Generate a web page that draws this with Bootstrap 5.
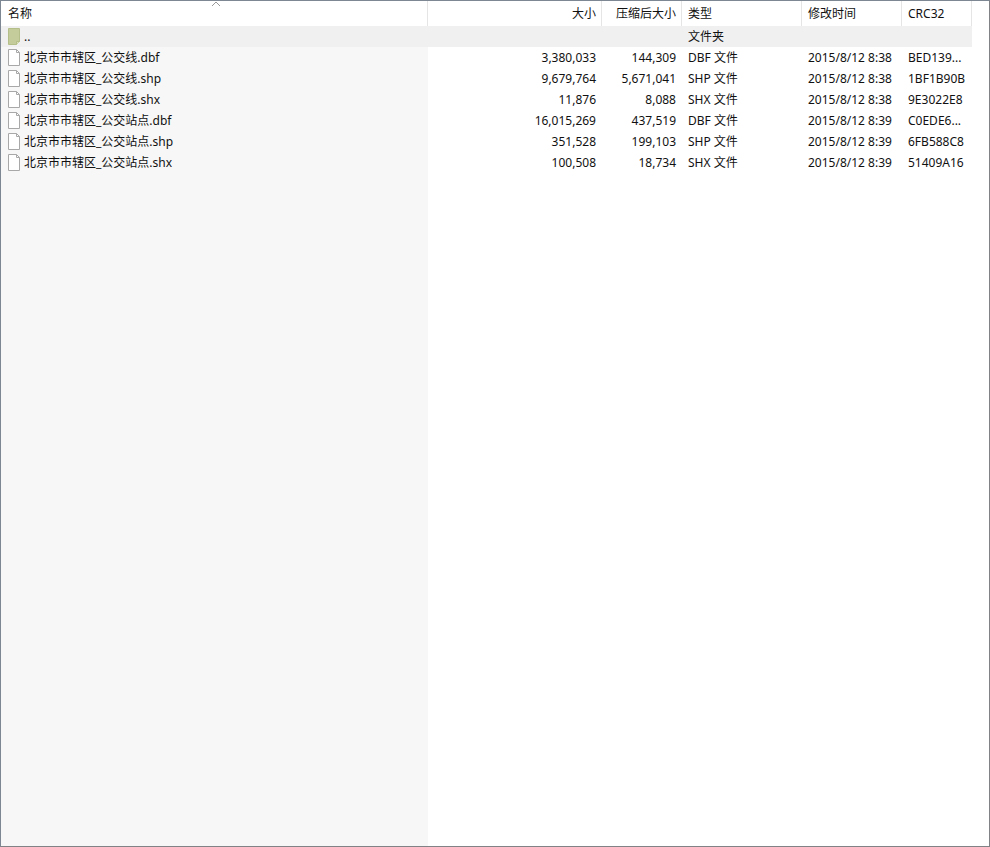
<!DOCTYPE html>
<html lang="zh-CN">
<head>
    <meta charset="UTF-8" />
    <meta name="viewport" content="width=device-width, initial-scale=1" />
    <title>北京市市辖区_公交</title>
    <link href="https://cdn.jsdelivr.net/npm/bootstrap@5.3.0/dist/css/bootstrap.min.css" rel="stylesheet" />
    <style>
        html, body { height: 100%; }
        body {
            background: #fff;
            color: #111;
            font-family: "Noto Sans", "Noto Sans CJK SC", sans-serif;
            font-size: 12px;
            margin: 0;
        }
        .zip-window {
            height: 847px;
            border: 1px solid #7d8794;
            border-right-color: #808285;
            border-bottom-color: #808285;
            position: relative;
        }
        .zip-list {
            table-layout: fixed;
            border-collapse: separate;
            border-spacing: 0;
            width: 971px;
        }
        .zip-list th, .zip-list td {
            padding: 0 6px;
            font-weight: 400;
            white-space: nowrap;
            overflow: hidden;
            line-height: 21px;
        }
        .zip-list th {
            height: 25px;
            line-height: 25px;
            border-right: 1px solid #e5e5e5;
        }
        .zip-list th:first-child { padding-left: 7px; }
        .zip-list th.text-end { padding-right: 5px; }
        .zip-list td { height: 21px; }
        .zip-list td:first-child { background: #f7f7f7; }
        .zip-list .row-up td { background: #f0f0f0; }
        .name-cell { display: flex; align-items: center; gap: 3px; }
        .sort-mark { position: absolute; left: 210px; top: 0; }
        .name-fill { width: 427px; background: #f7f7f7; flex: none; }
    </style>
</head>
<body>
    <div class="zip-window d-flex flex-column">
        <svg class="sort-mark" width="10" height="6" viewBox="0 0 10 6"><path d="M1 5 5 1l4 4" fill="none" stroke="#9a9a9a" /></svg>
        <table class="zip-list" id="fileTable">
            <colgroup>
                <col style="width:427px" /><col style="width:174px" /><col style="width:80px" /><col style="width:120px" /><col style="width:100px" /><col style="width:70px" />
            </colgroup>
            <thead>
                <tr>
                    <th>名称</th>
                    <th class="text-end">大小</th>
                    <th class="text-end">压缩后大小</th>
                    <th>类型</th>
                    <th>修改时间</th>
                    <th>CRC32</th>
                </tr>
            </thead>
            <tbody>
                <tr class="row-up">
                    <td><div class="name-cell">
                        <svg width="14" height="17" viewBox="0 0 14 17"><path d="M1.5.5h11v13l-3 3h-8z" fill="#c3cc9a" stroke="#b4be88" /><path d="M9.5 16.5v-3h3" fill="#dfe3bd" stroke="#b4be88" /></svg>
                        <span>..</span></div></td>
                    <td></td><td></td><td>文件夹</td><td></td><td></td>
                </tr>
                <tr>
                    <td><div class="name-cell">
                        <svg width="14" height="17" viewBox="0 0 14 17"><path d="M1.5.5h8l3 3v13h-11z" fill="#fff" stroke="#a8a8a8" /><path d="M9.5.5v3h3" fill="none" stroke="#a8a8a8" /></svg>
                        <span>北京市市辖区_公交线.dbf</span></div></td>
                    <td class="text-end">3,380,033</td><td class="text-end">144,309</td><td>DBF 文件</td><td>2015/8/12 8:38</td><td>BED139...</td>
                </tr>
                <tr>
                    <td><div class="name-cell">
                        <svg width="14" height="17" viewBox="0 0 14 17"><path d="M1.5.5h8l3 3v13h-11z" fill="#fff" stroke="#a8a8a8" /><path d="M9.5.5v3h3" fill="none" stroke="#a8a8a8" /></svg>
                        <span>北京市市辖区_公交线.shp</span></div></td>
                    <td class="text-end">9,679,764</td><td class="text-end">5,671,041</td><td>SHP 文件</td><td>2015/8/12 8:38</td><td>1BF1B90B</td>
                </tr>
                <tr>
                    <td><div class="name-cell">
                        <svg width="14" height="17" viewBox="0 0 14 17"><path d="M1.5.5h8l3 3v13h-11z" fill="#fff" stroke="#a8a8a8" /><path d="M9.5.5v3h3" fill="none" stroke="#a8a8a8" /></svg>
                        <span>北京市市辖区_公交线.shx</span></div></td>
                    <td class="text-end">11,876</td><td class="text-end">8,088</td><td>SHX 文件</td><td>2015/8/12 8:38</td><td>9E3022E8</td>
                </tr>
                <tr>
                    <td><div class="name-cell">
                        <svg width="14" height="17" viewBox="0 0 14 17"><path d="M1.5.5h8l3 3v13h-11z" fill="#fff" stroke="#a8a8a8" /><path d="M9.5.5v3h3" fill="none" stroke="#a8a8a8" /></svg>
                        <span>北京市市辖区_公交站点.dbf</span></div></td>
                    <td class="text-end">16,015,269</td><td class="text-end">437,519</td><td>DBF 文件</td><td>2015/8/12 8:39</td><td>C0EDE6...</td>
                </tr>
                <tr>
                    <td><div class="name-cell">
                        <svg width="14" height="17" viewBox="0 0 14 17"><path d="M1.5.5h8l3 3v13h-11z" fill="#fff" stroke="#a8a8a8" /><path d="M9.5.5v3h3" fill="none" stroke="#a8a8a8" /></svg>
                        <span>北京市市辖区_公交站点.shp</span></div></td>
                    <td class="text-end">351,528</td><td class="text-end">199,103</td><td>SHP 文件</td><td>2015/8/12 8:39</td><td>6FB588C8</td>
                </tr>
                <tr>
                    <td><div class="name-cell">
                        <svg width="14" height="17" viewBox="0 0 14 17"><path d="M1.5.5h8l3 3v13h-11z" fill="#fff" stroke="#a8a8a8" /><path d="M9.5.5v3h3" fill="none" stroke="#a8a8a8" /></svg>
                        <span>北京市市辖区_公交站点.shx</span></div></td>
                    <td class="text-end">100,508</td><td class="text-end">18,734</td><td>SHX 文件</td><td>2015/8/12 8:39</td><td>51409A16</td>
                </tr>
            </tbody>
        </table>
        <div class="d-flex flex-grow-1">
            <div class="name-fill"></div>
        </div>
    </div>
</body>
</html>
